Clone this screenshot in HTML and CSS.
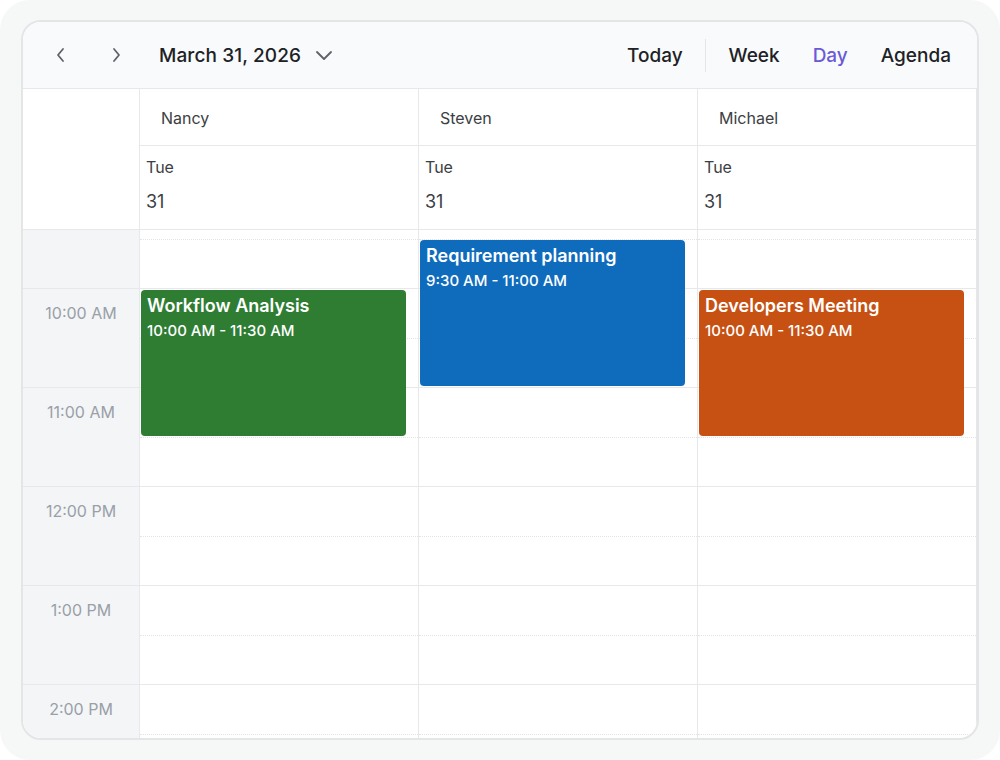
FILE: index.html
```html
<!DOCTYPE html>
<html lang="en">
<head>
<meta charset="utf-8">
<title>Scheduler - Day view</title>
<link rel="stylesheet" href="styles.css">
</head>
<body>
<div class="frame">
  <div class="card">
    <div class="toolbar">
      <div class="tb-left">
        <button class="icon-btn" aria-label="Previous">
          <svg width="12" height="16" viewBox="0 0 12 16"><path d="M8 2 L3 8 L8 14" fill="none" stroke="#5f6368" stroke-width="1.8" stroke-linecap="round" stroke-linejoin="round"/></svg>
        </button>
        <button class="icon-btn" aria-label="Next">
          <svg width="12" height="16" viewBox="0 0 12 16"><path d="M4 2 L9 8 L4 14" fill="none" stroke="#5f6368" stroke-width="1.8" stroke-linecap="round" stroke-linejoin="round"/></svg>
        </button>
        <div class="date-picker">
          <span class="date-text">March 31, 2026</span>
          <svg width="18" height="12" viewBox="0 0 18 12"><path d="M2 3 L9 10 L16 3" fill="none" stroke="#5f6368" stroke-width="1.8" stroke-linecap="round" stroke-linejoin="round"/></svg>
        </div>
      </div>
      <div class="tb-right">
        <span class="tb-btn">Today</span>
        <span class="tb-sep"></span>
        <span class="tb-btn">Week</span>
        <span class="tb-btn active">Day</span>
        <span class="tb-btn">Agenda</span>
      </div>
    </div>

    <div class="head">
      <div class="corner"></div>
      <div class="res-head">
        <div class="res-name">Nancy</div>
        <div class="res-date"><div class="dow">Tue</div><div class="dnum">31</div></div>
      </div>
      <div class="res-head">
        <div class="res-name">Steven</div>
        <div class="res-date"><div class="dow">Tue</div><div class="dnum">31</div></div>
      </div>
      <div class="res-head">
        <div class="res-name">Michael</div>
        <div class="res-date"><div class="dow">Tue</div><div class="dnum">31</div></div>
      </div>
    </div>

    <div class="body">
      <div class="body-inner">
        <div class="times">
          <div class="time-cell"></div>
          <div class="time-cell"><span>10:00 AM</span></div>
          <div class="time-cell"><span>11:00 AM</span></div>
          <div class="time-cell"><span>12:00 PM</span></div>
          <div class="time-cell"><span>1:00 PM</span></div>
          <div class="time-cell"><span>2:00 PM</span></div>
        </div>
        <div class="col">
          <div class="slot"></div><div class="slot"></div><div class="slot"></div>
          <div class="slot"></div><div class="slot"></div><div class="slot"></div>
          <div class="event green ev-10">
            <div class="ev-title">Workflow Analysis</div>
            <div class="ev-time">10:00 AM - 11:30 AM</div>
          </div>
        </div>
        <div class="col">
          <div class="slot"></div><div class="slot"></div><div class="slot"></div>
          <div class="slot"></div><div class="slot"></div><div class="slot"></div>
          <div class="event blue ev-930">
            <div class="ev-title">Requirement planning</div>
            <div class="ev-time">9:30 AM - 11:00 AM</div>
          </div>
        </div>
        <div class="col">
          <div class="slot"></div><div class="slot"></div><div class="slot"></div>
          <div class="slot"></div><div class="slot"></div><div class="slot"></div>
          <div class="event orange ev-10">
            <div class="ev-title">Developers Meeting</div>
            <div class="ev-time">10:00 AM - 11:30 AM</div>
          </div>
        </div>
      </div>
    </div>
  </div>
</div>
</body>
</html>
```

FILE: styles.css
```css
* { box-sizing: border-box; }

html, body {
  margin: 0;
  padding: 0;
  background: #ffffff;
}

body {
  font-family: Inter, "Noto Sans", "Liberation Sans", sans-serif;
  color: #1f2328;
}

.frame {
  width: 1000px;
  height: 760px;
  background: #f6f7f7;
  border-radius: 30px;
  padding: 20px 21px 20px 21px;
}

.card {
  width: 958px;
  height: 720px;
  background: #ffffff;
  border: 2px solid #e4e5e7;
  border-radius: 20px;
  overflow: hidden;
  display: flex;
  flex-direction: column;
}

/* toolbar */
.toolbar {
  height: 67px;
  flex: none;
  background: #f8fafc;
  border-bottom: 1px solid #e6e8eb;
  display: flex;
  align-items: center;
  justify-content: space-between;
  padding: 0 26px 0 26px;
}

.tb-left {
  display: flex;
  align-items: center;
}

.icon-btn {
  border: none;
  background: transparent;
  width: 24px;
  height: 32px;
  padding: 0;
  display: flex;
  align-items: center;
  justify-content: center;
  margin-right: 31px;
  cursor: pointer;
}

.date-picker {
  display: flex;
  align-items: center;
  gap: 14px;
}

.date-text {
  font-size: 19px;
  font-weight: 500;
  color: #202124;
  letter-spacing: 0.1px;
}

.tb-right {
  display: flex;
  align-items: center;
}

.tb-btn {
  font-size: 19px;
  font-weight: 500;
  color: #202124;
  margin-left: 33px;
}

.tb-btn:first-child { margin-left: 0; }

.tb-btn.active { color: #6a5ad8; }

.tb-sep {
  width: 1px;
  height: 33px;
  background: #e3e5e8;
  margin-left: 22px;
  margin-right: -10px;
}

/* header */
.head {
  flex: none;
  display: grid;
  grid-template-columns: 117px repeat(3, 1fr);
  border-bottom: 1px solid #e6e8eb;
}

.corner {
  border-right: 1px solid #e6e8eb;
  background: #ffffff;
}

.res-head {
  border-right: 1px solid #e6e8eb;
  display: flex;
  flex-direction: column;
}

.res-name {
  height: 57px;
  border-bottom: 1px solid #e6e8eb;
  padding-left: 21px;
  padding-top: 1px;
  display: flex;
  align-items: center;
  font-size: 16px;
  color: #3c4043;
}

.res-date {
  height: 83px;
  padding: 11px 0 0 6px;
  color: #3c4043;
}

.dow {
  font-size: 16px;
  line-height: 20px;
}

.dnum {
  font-size: 18px;
  line-height: 22px;
  margin-top: 14px;
}

/* body */
.body {
  flex: 1;
  overflow: hidden;
}

.body-inner {
  margin-top: -41px;
  display: grid;
  grid-template-columns: 117px repeat(3, 1fr);
}

.times {
  background: #f3f5f7;
  border-right: 1px solid #e6e8eb;
}

.time-cell {
  height: 99px;
  border-top: 1px solid #e6e8eb;
  text-align: center;
  padding-top: 14px;
  font-size: 16px;
  line-height: 20px;
  color: #9a9fa8;
}

.col {
  position: relative;
  border-right: 1px solid #e6e8eb;
}

.slot {
  height: 99px;
  border-top: 1px solid #e6e8eb;
  position: relative;
}

.slot::after {
  content: "";
  position: absolute;
  left: 0;
  right: 0;
  top: 49px;
  border-top: 1px dotted #e2e4e7;
}

.event {
  position: absolute;
  left: 1px;
  right: 12px;
  height: 146px;
  border-radius: 4px;
  padding: 5px 6px;
  color: #ffffff;
}

.ev-10 { top: 101px; }
.ev-930 { top: 51px; }

.green { background: #2e7d32; }
.blue { background: #0f6cbd; }
.orange { background: #c75113; }

.ev-title {
  font-size: 18px;
  font-weight: 600;
  line-height: 21px;
}

.ev-time {
  font-size: 15px;
  font-weight: 500;
  line-height: 19px;
  margin-top: 5px;
}
```
